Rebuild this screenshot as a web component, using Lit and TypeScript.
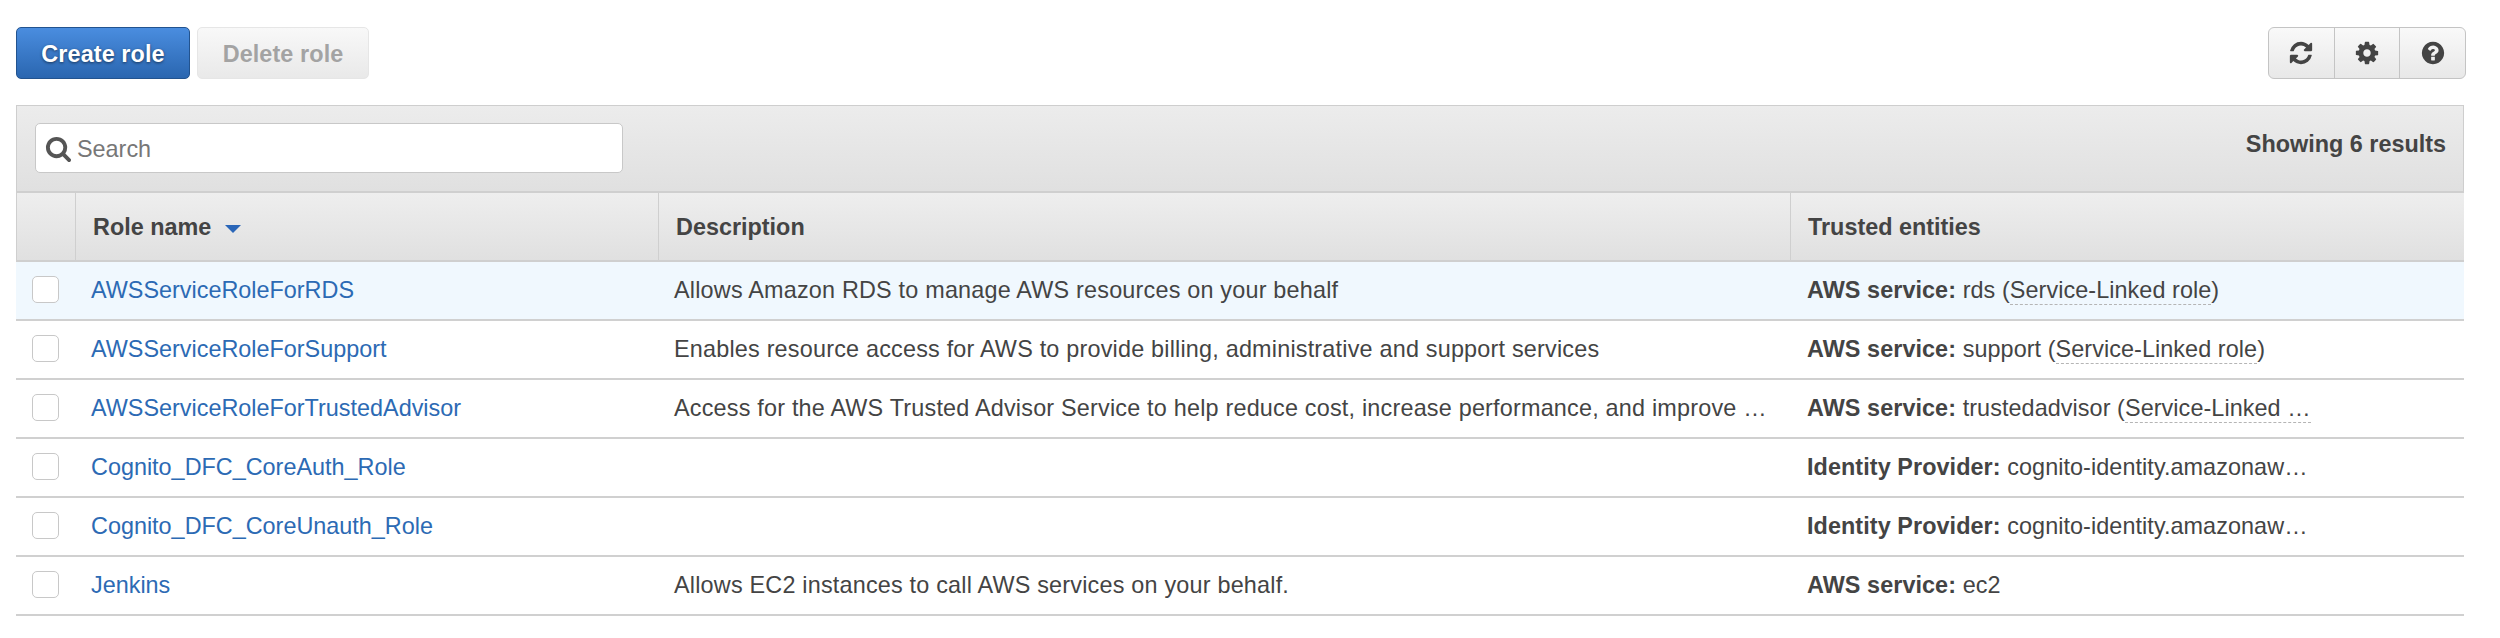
import { LitElement, html, css, svg } from "lit";
import { customElement } from "lit/decorators.js";

const ICONS = {
  refresh: "M1639 1056q0 5-1 7-64 268-268 434.5t-478 166.5q-146 0-282.5-55t-243.5-157l-129 129q-19 19-45 19t-45-19-19-45v-448q0-26 19-45t45-19h448q26 0 45 19t19 45-19 45l-137 137q71 66 161 102t187 36q134 0 250-65t186-179q11-17 53-117 8-23 30-23h192q13 0 22.5 9.5t9.5 22.5zm25-800v448q0 26-19 45t-45 19h-448q-26 0-45-19t-19-45 19-45l138-138q-148-137-349-137-134 0-250 65t-186 179q-11 17-53 117-8 23-30 23h-199q-13 0-22.5-9.5t-9.5-22.5v-7q65-268 270-434.5t480-166.5q146 0 284 55.5t245 156.5l130-129q19-19 45-19t45 19 19 45z",
  cog: "M1152 896q0-106-75-181t-181-75-181 75-75 181 75 181 181 75 181-75 75-181zm512-109v222q0 12-8 23t-20 13l-185 28q-19 54-39 91 35 50 107 138 10 12 10 25t-9 23q-27 37-99 108t-94 71q-12 0-26-9l-138-108q-44 23-91 38-16 136-29 186-7 28-36 28h-222q-14 0-24.5-8.5t-11.5-21.5l-28-184q-49-16-90-37l-141 107q-10 9-25 9-14 0-25-11-126-114-165-168-7-10-7-23 0-12 8-23 15-21 51-66.5t54-70.5q-27-50-41-99l-183-27q-13-2-21-12.5t-8-23.5v-222q0-12 8-23t19-13l186-28q14-46 39-92-40-57-107-138-10-12-10-24 0-10 9-23 26-36 98.5-107.5t94.5-71.5q13 0 26 10l138 107q44-23 91-38 16-136 29-186 7-28 36-28h222q14 0 24.5 8.5t11.5 21.5l28 184q49 16 90 37l142-107q9-9 24-9 13 0 25 10 129 119 165 170 7 8 7 22 0 12-8 23-15 21-51 66.5t-54 70.5q26 50 41 98l183 28q13 2 21 12.5t8 23.5z",
  help: "M1024 1376v-192q0-14-9-23t-23-9h-192q-14 0-23 9t-9 23v192q0 14 9 23t23 9h192q14 0 23-9t9-23zm256-672q0-88-55.5-163t-138.5-116-170-41q-243 0-371 213-15 24 8 42l132 100q7 6 19 6 16 0 25-12 53-68 86-92 34-24 86-24 48 0 85.5 26t37.5 59q0 38-20 61t-68 45q-63 28-115.5 86.5t-52.5 125.5v36q0 14 9 23t23 9h192q14 0 23-9t9-23q0-19 21.5-49.5t54.5-49.5q32-18 49-28.5t46-35 44.5-48 28-60.5 12.5-81zm384 192q0 209-103 385.5t-279.5 279.5-385.5 103-385.5-103-279.5-279.5-103-385.5 103-385.5 279.5-279.5 385.5-103 385.5 103 279.5 279.5 103 385.5z",
  search: "M1216 832q0-185-131.5-316.5t-316.5-131.5-316.5 131.5-131.5 316.5 131.5 316.5 316.5 131.5 316.5-131.5 131.5-316.5zm512 832q0 52-38 90t-90 38q-54 0-90-38l-343-342q-179 124-399 124-143 0-273.5-55.5t-225-150-150-225-55.5-273.5 55.5-273.5 150-225 225-150 273.5-55.5 273.5 55.5 225 150 150 225 55.5 273.5q0 220-124 399l343 343q37 37 37 90z",
};

const icon = (d: string, cls: string) =>
  html`<svg class=${cls} viewBox="0 0 1792 1792" fill="currentColor">${svg`<path d=${d}></path>`}</svg>`;

interface Row {
  name: string;
  desc: string;
  label: string;
  value: string;
  linked?: string;
  tail?: string;
  active?: boolean;
}

const ROWS: Row[] = [
  { name: "AWSServiceRoleForRDS", desc: "Allows Amazon RDS to manage AWS resources on your behalf", label: "AWS service:", value: "rds (", linked: "Service-Linked role", tail: ")", active: true },
  { name: "AWSServiceRoleForSupport", desc: "Enables resource access for AWS to provide billing, administrative and support services", label: "AWS service:", value: "support (", linked: "Service-Linked role", tail: ")" },
  { name: "AWSServiceRoleForTrustedAdvisor", desc: "Access for the AWS Trusted Advisor Service to help reduce cost, increase performance, and improve …", label: "AWS service:", value: "trustedadvisor (", linked: "Service-Linked …" },
  { name: "Cognito_DFC_CoreAuth_Role", desc: "", label: "Identity Provider:", value: "cognito-identity.amazonaw…" },
  { name: "Cognito_DFC_CoreUnauth_Role", desc: "", label: "Identity Provider:", value: "cognito-identity.amazonaw…" },
  { name: "Jenkins", desc: "Allows EC2 instances to call AWS services on your behalf.", label: "AWS service:", value: "ec2" },
];

@customElement("app-root")
export class AppRoot extends LitElement {
  static styles = css`
    :host {
      display: block;
      box-sizing: border-box;
      height: 638px;
      padding: 27px 36px 0 16px;
      background: #fff;
      font-family: "Liberation Sans", Arial, sans-serif;
      font-size: 23.4px;
      color: #444;
      overflow: hidden;
    }
    .top {
      display: flex;
      justify-content: space-between;
      height: 52px;
      margin-bottom: 26px;
    }
    .actions { display: flex; gap: 7px; }
    .btn {
      display: flex;
      align-items: center;
      justify-content: center;
      box-sizing: border-box;
      height: 52px;
      padding-top: 2px;
      border-radius: 5px;
      font-weight: 700;
      letter-spacing: 0.1px;
    }
    .primary {
      width: 174px;
      color: #fff;
      background: linear-gradient(#4a8ddf, #2a66b0);
      border: 1.5px solid #22538f;
      text-shadow: 0 1px 3px rgba(0, 0, 0, 0.55);
    }
    .disabled {
      width: 172px;
      color: #a3a3a3;
      background: linear-gradient(#f8f8f8, #e9e9e9);
      border: 1.5px solid #e6e6e6;
    }
    .tools {
      display: flex;
      box-sizing: border-box;
      width: 198px;
      height: 52px;
      margin-right: -2px;
      border: 1.5px solid #c4c4c4;
      border-radius: 6px;
      background: linear-gradient(#f9f9f9, #e8e8e8);
      color: #444;
    }
    .tool {
      flex: 1;
      display: flex;
      align-items: center;
      justify-content: center;
    }
    .tool + .tool { border-left: 1.5px solid #c4c4c4; }
    .ti { width: 26px; height: 26px; }
    .bar {
      display: flex;
      justify-content: space-between;
      box-sizing: border-box;
      height: 86px;
      padding: 17px 17px 0 18px;
      background: linear-gradient(#ececec, #e0e0e0);
      border: 1.5px solid #cecece;
      border-bottom: 0;
    }
    .search {
      display: flex;
      align-items: center;
      gap: 5px;
      box-sizing: border-box;
      width: 588px;
      height: 50px;
      padding: 2px 0 0 9px;
      background: #fff;
      border: 1.5px solid #c8c8c8;
      border-radius: 5px;
      color: #777;
    }
    .si { width: 27px; height: 27px; color: #555; margin-top: -2px; }
    .count { font-weight: 700; padding-top: 8px; }
    .grid {
      display: grid;
      grid-template-columns: 59px 583px 1132px 1fr;
    }
    .head {
      height: 71px;
      padding-top: 2px;
      background: linear-gradient(#eeeeee, #e0e0e0);
      border-top: 2px solid #cfcfcf;
      border-bottom: 2px solid #cfcfcf;
      box-sizing: border-box;
    }
    .hc {
      display: flex;
      align-items: center;
      gap: 14px;
      padding-left: 17px;
      font-weight: 700;
      border-left: 1.5px solid #cfcfcf;
    }
    .hc:first-child { padding: 0; }
    .hc:last-child { border-right: 1.5px solid #cfcfcf; }
    .caret {
      width: 0;
      height: 0;
      border-left: 8px solid transparent;
      border-right: 8px solid transparent;
      border-top: 8px solid #2a66b8;
      margin-top: 3px;
    }
    .row { display: contents; }
    .c {
      display: flex;
      align-items: center;
      box-sizing: border-box;
      height: 59px;
      padding-left: 16px;
      border-bottom: 2px solid #d0d0d0;
      white-space: pre;
      overflow: hidden;
    }
    .c.desc { letter-spacing: 0.2px; }
    .c.trust { padding-left: 17px; letter-spacing: 0.07px; }
    .row.active .c { background: #f0f8fe; }
    .box {
      box-sizing: border-box;
      width: 27px;
      height: 27px;
      margin-top: -2px;
      background: #fff;
      border: 1.5px solid #c8c8c8;
      border-radius: 5px;
    }
    a { color: #2c6ab4; text-decoration: none; }
    b { font-weight: 700; }
    .dash { border-bottom: 1.5px dashed #b5b5b5; padding-bottom: 1px; }
  `;

  render() {
    return html`
      <div class="top">
        <div class="actions">
          <div class="btn primary">Create role</div>
          <div class="btn disabled">Delete role</div>
        </div>
        <div class="tools">
          <div class="tool">${icon(ICONS.refresh, "ti")}</div>
          <div class="tool">${icon(ICONS.cog, "ti")}</div>
          <div class="tool">${icon(ICONS.help, "ti")}</div>
        </div>
      </div>
      <div class="panel">
        <div class="bar">
          <div class="search">${icon(ICONS.search, "si")}<span>Search</span></div>
          <div class="count">Showing 6 results</div>
        </div>
        <div class="grid">
          <div class="head hc"></div>
          <div class="head hc">Role name <span class="caret"></span></div>
          <div class="head hc">Description</div>
          <div class="head hc">Trusted entities</div>
          ${ROWS.map(
            (r) => html`<div class="row ${r.active ? "active" : ""}">
              <div class="c"><span class="box"></span></div>
              <div class="c"><a>${r.name}</a></div>
              <div class="c desc">${r.desc}</div>
              <div class="c trust">
                <span><b>${r.label}</b> ${r.value}${r.linked ? html`<span class="dash">${r.linked}</span>` : ""}${r.tail ?? ""}</span>
              </div>
            </div>`
          )}
        </div>
      </div>
    `;
  }
}
